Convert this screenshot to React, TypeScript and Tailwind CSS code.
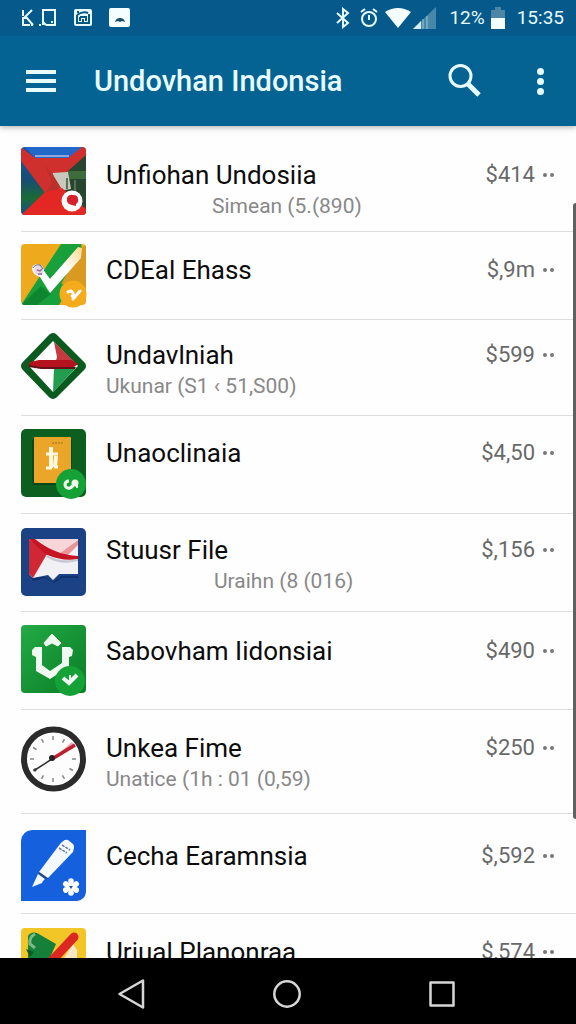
import type { ReactNode } from 'react'

type Item = {
  title: string
  sub?: string
  subClass?: string
  price: string
  rowClass: string
  textClass: string
  icon: ReactNode
}

const SunIcon = () => (
  <svg width="66" height="72" viewBox="0 0 66 72" aria-hidden="true">
    <defs>
      <clipPath id="sun-clip"><rect width="65" height="68" rx="4" /></clipPath>
      <linearGradient id="sun-left" x1="0" y1="0" x2="0" y2="1">
        <stop offset="0" stopColor="#1855a8" />
        <stop offset="0.5" stopColor="#164f70" />
        <stop offset="0.75" stopColor="#1c6a37" />
        <stop offset="1" stopColor="#17508a" />
      </linearGradient>
    </defs>
    <g clipPath="url(#sun-clip)">
      <rect width="65" height="68" fill="url(#sun-left)" />
      <path d="M4 0H62L50 11H14Z" fill="#2268c8" />
      <path d="M14 9H48" stroke="#8fa6dc" strokeWidth="2" />
      <path d="M28 20L65 8V68H38Z" fill="#27452f" />
      <path d="M46 24H65V32H46Z" fill="#3d6b3c" />
      <path d="M31 25H47L50 42L38 44Z" fill="#c9c8bd" />
      <path d="M46 31v11M54 33v12" stroke="#5c6d58" strokeWidth="2" />
      <path d="M0 0L14 11H47L61 0H65V8L46 25L31 26L40 41L24 46L0 14Z" fill="#cf2f2d" />
      <path d="M24 18L40 41L24 46L31 36Z" fill="#b9312c" />
      <path d="M0 68L24 45L41 41L65 62V68Z" fill="#e22724" />
    </g>
    <circle cx="51" cy="54" r="10.5" fill="#fff" />
    <path d="M46 51q2-4 6-3q5 0 5 4q1 3-2 5l0 2-4-1q-6-1-5-7Z" fill="#d6202c" />
  </svg>
)

const CheckIcon = () => (
  <svg width="66" height="72" viewBox="0 0 66 72" aria-hidden="true">
    <defs>
      <clipPath id="check-clip"><rect width="65" height="61" rx="4" /></clipPath>
      <linearGradient id="check-white" x1="0" y1="1" x2="1" y2="0">
        <stop offset="0.6" stopColor="#fff" />
        <stop offset="1" stopColor="#fbd98a" />
      </linearGradient>
    </defs>
    <g clipPath="url(#check-clip)">
      <rect width="65" height="61" fill="#efa91d" />
      <path d="M0 61L40 0H60L63 18L38 61Z" fill="#17a03b" />
      <path d="M0 61L20 42L30 50L16 61Z" fill="#0e8630" />
      <path d="M60 6L65 0V44L40 40Z" fill="#d99a22" />
      <path d="M11 25Q11 20 18 20L29 35L57 3L61 4L60 14L29 49L19 33Q12 31 11 25Z" fill="url(#check-white)" />
    </g>
    <circle cx="18" cy="26" r="5" fill="#e4d9ea" />
    <path d="M12 24q2-4 7-3l3 4" stroke="#56647e" strokeWidth="1" fill="none" />
    <path d="M16 26l3 1 2-2M17 30h4" stroke="#a0668f" strokeWidth="1.5" fill="none" />
    <circle cx="52" cy="50" r="13.5" fill="#f4ab1c" />
    <path d="M52 55l7-8M47 48l3-1 2 2M51 52l2-1" stroke="#fff" strokeWidth="3" fill="none" strokeLinecap="round" />
  </svg>
)

const DiamondIcon = () => (
  <svg width="66" height="72" viewBox="0 0 66 72" aria-hidden="true">
    <path d="M32 5L60 33L32 61L5 33Z" fill="#0b5a20" stroke="#0b5a20" strokeWidth="10" strokeLinejoin="round" />
    <path d="M32 8L57 33L32 59L8 33Z" fill="#fff" />
    <path d="M33 9L56 31H34L36 24Z" fill="#c43a40" />
    <path d="M33 34H56L32 59Z" fill="#249c50" />
    <path d="M9 29L18 27H50L57 31L53 34H18L8 33Z" fill="#b5121e" />
    <path d="M8 33L20 35H54" stroke="#611117" strokeWidth="2" fill="none" />
  </svg>
)

const BookIcon = () => (
  <svg width="66" height="72" viewBox="0 0 66 72" aria-hidden="true">
    <rect width="65" height="68" rx="5" fill="#0d5f20" />
    <rect x="11" y="10" width="40" height="46" rx="2" fill="#084716" />
    <rect x="13" y="8" width="37" height="46" rx="1" fill="#eba528" />
    <path d="M31 14h11" stroke="#9b731f" strokeDasharray="2 1" />
    <path d="M30 18V39M35 27L34 38" stroke="#fff7de" strokeWidth="4" fill="none" />
    <path d="M25 25H37M25 39H31M33 38H37" stroke="#fff7de" strokeWidth="3" fill="none" />
    <circle cx="50" cy="55" r="15" fill="#14a237" />
    <path d="M48 52q-4 0-4 4q1 4 5 3q3-1 4-5" stroke="#eefbea" strokeWidth="3" fill="none" />
    <circle cx="54" cy="54" r="3.5" fill="#eefbea" />
    <path d="M56 54v5" stroke="#eefbea" strokeWidth="2" />
  </svg>
)

const MailIcon = () => (
  <svg width="66" height="72" viewBox="0 0 66 72" aria-hidden="true">
    <rect width="65" height="68" rx="5" fill="#1c4286" />
    <path d="M10 49H24L32 54L40 48H57V50L41 50L33 55L24 50L12 53Z" fill="#12306a" />
    <path d="M8 11H57V46H38L32 52L27 47L12 50L8 46Z" fill="#f1f1f5" />
    <path d="M14 11H57L39 26Z" fill="#f7d5d8" />
    <path d="M38 26L57 12V17L46 28Z" fill="#e9949a" />
    <path d="M8 11L26 26L12 50L8 46Z" fill="#cf2834" />
    <path d="M8 11H14Q34 27 57 28V31Q42 34 24 26Z" fill="#c51525" />
    <path d="M26 27Q40 35 57 31V33Q40 38 25 29Z" fill="#c8c9d2" />
  </svg>
)

const ShieldIcon = () => (
  <svg width="66" height="72" viewBox="0 0 66 72" aria-hidden="true">
    <defs>
      <linearGradient id="shield-bg" x1="0" y1="0" x2="1" y2="1">
        <stop offset="0" stopColor="#23aa46" />
        <stop offset="1" stopColor="#0a7d25" />
      </linearGradient>
    </defs>
    <rect width="65" height="68" rx="4" fill="url(#shield-bg)" />
    <path d="M31 9L40 18L37 21L31 18L25 21L23 18Z" fill="#effaf0" stroke="#effaf0" strokeWidth="1" strokeLinejoin="round" />
    <path d="M11 25L14 22H21V40L29 46L41 38V22H49L52 25L51 31L48 32V42L29 54L15 46V32L11 30Z" fill="#effaf0" />
    <circle cx="49" cy="56" r="15" fill="#14a237" />
    <path d="M42 53l6 5 8-8" stroke="#effaf0" strokeWidth="4" fill="none" />
    <path d="M49 50v6" stroke="#effaf0" strokeWidth="2" />
  </svg>
)

const ticks = [0, 30, 60, 90, 120, 150, 180, 210, 240, 270, 300, 330]

const ClockIcon = () => (
  <svg width="66" height="72" viewBox="0 0 66 72" aria-hidden="true">
    <circle cx="32.5" cy="33" r="29.5" fill="#fdfdfd" stroke="#2b2b2b" strokeWidth="6" />
    {ticks.map((deg) => (
      <path key={deg} d="M32 10v4" stroke="#888" strokeWidth="1.5" transform={`rotate(${deg} 32 33)`} />
    ))}
    <path d="M31 33L51 16L54 20Z" fill="#e9a9ae" />
    <path d="M31 33L54 19" stroke="#c01d31" strokeWidth="3.5" />
    <path d="M31 33L14 44" stroke="#333" strokeWidth="1.5" />
    <circle cx="31" cy="32" r="3" fill="#222" />
    <circle cx="14" cy="44" r="1.5" fill="#333" />
  </svg>
)

const PenIcon = () => (
  <svg width="66" height="72" viewBox="0 0 66 72" aria-hidden="true">
    <path d="M11 0H65V62Q64 70 56 71H0V11Q1 1 11 0Z" fill="#1560dd" />
    <path d="M41 12Q44 9 47 10L52 14Q54 16 52 22L27 48L18 42L39 14Z" fill="#f4f8ff" />
    <path d="M17 44L24 49L22 51L21 53L11 57Z" fill="#f4f8ff" />
    <path d="M41 15L49 20M38 18L46 23" stroke="#6b7b96" strokeWidth="1.5" strokeDasharray="3 1" />
    <path d="M18 43L26 49" stroke="#2d4775" strokeWidth="2" />
    {[0, 60, 120, 180, 240, 300].map((deg) => (
      <circle key={deg} cx="50" cy="51" r="2.8" fill="#fff" transform={`rotate(${deg} 50 57)`} />
    ))}
    <circle cx="50" cy="57" r="5" fill="#fff" />
    <path d="M48 56h4l-2 3Z" fill="#2459a8" />
  </svg>
)

const PlanIcon = () => (
  <svg width="66" height="72" viewBox="0 0 66 72" aria-hidden="true">
    <rect width="65" height="68" rx="4" fill="#f2c626" />
    <path d="M52 16L56 22V60H24Z" fill="#f3e7c8" />
    <path d="M7 8Q10 3 16 5L35 16L22 46L7 32Z" fill="#15803a" />
    <path d="M14 6Q8 9 9 16L14 20" stroke="#7db98a" strokeWidth="3" fill="none" />
    <path d="M5 21l8 3-4 5" fill="#0c5a27" />
    <path d="M26 38L53 9" stroke="#dc2723" strokeWidth="9" strokeLinecap="round" />
  </svg>
)

const ITEMS: Item[] = [
  { title: 'Unfiohan Undosiia', sub: 'Simean (5.(890)', subClass: 'pl-[106px]', price: '$414', rowClass: 'h-[98px] pt-[13px]', textClass: 'pt-3', icon: <SunIcon /> },
  { title: 'CDEal Ehass', price: '$,9m', rowClass: 'h-[88px] pt-3', textClass: 'pt-[10px]', icon: <CheckIcon /> },
  { title: 'Undavlniah', sub: 'Ukunar (S1 ‹ 51,S00)', price: '$599', rowClass: 'h-24 pt-[13px]', textClass: 'pt-[6px]', icon: <DiamondIcon /> },
  { title: 'Unaoclinaia', price: '$4,50', rowClass: 'h-[98px] pt-[13px]', textClass: 'pt-[8px]', icon: <BookIcon /> },
  { title: 'Stuusr File', sub: 'Uraihn (8 (016)', subClass: 'pl-[108px]', price: '$,156', rowClass: 'h-[98px] pt-[14px]', textClass: 'pt-[6px]', icon: <MailIcon /> },
  { title: 'Sabovham Iidonsiai', price: '$490', rowClass: 'h-[98px] pt-[13px]', textClass: 'pt-[10px]', icon: <ShieldIcon /> },
  { title: 'Unkea Fime', sub: 'Unatice (1h : 01 (0,59)', price: '$250', rowClass: 'h-[104px] pt-4', textClass: 'pt-[6px]', icon: <ClockIcon /> },
  { title: 'Cecha Earamnsia', price: '$,592', rowClass: 'h-[100px] pt-4', textClass: 'pt-[10px]', icon: <PenIcon /> },
  { title: 'Uriual Planonraa', price: '$,574', rowClass: 'h-[98px] pt-[14px]', textClass: 'pt-[8px]', icon: <PlanIcon /> },
]

function StatusBar () {
  return (
    <div className="flex h-9 items-center justify-between bg-[#055a8b] pr-3 pl-5 text-[#e8fbff]">
      <div className="flex items-center gap-4">
        <svg width="37" height="20" viewBox="0 0 37 20" fill="none" stroke="currentColor" strokeWidth="2" aria-hidden="true">
          <path d="M3 2v6M12 2L4 10M6 10H3v7h7M6 9l7 8M12 15v3M20 16v2M23 17V2h12v15H26M26 17l-3-3M32 13v2" />
        </svg>
        <svg width="20" height="20" viewBox="0 0 20 20" fill="none" aria-hidden="true">
          <rect x="1" y="1" width="18" height="17" rx="2" fill="#e8fbff" />
          <path d="M4 4h2M4 7q6-4 11-2M4 7v8h12V6M7 9h6v4M7 13V9M10 11v4" stroke="#075883" strokeWidth="2" />
        </svg>
        <svg width="21" height="20" viewBox="0 0 21 20" aria-hidden="true">
          <rect width="21" height="19" rx="2" fill="#f4feff" />
          <path d="M6 14q1-4 5-4t5 4l-3-1-2 1-2-1Z" fill="#174c68" />
        </svg>
      </div>
      <div className="flex items-center text-[19px] leading-6">
        <svg width="16" height="22" viewBox="0 0 16 22" fill="none" stroke="currentColor" strokeWidth="2" aria-hidden="true">
          <path d="M2 6l11 10-5 4V2l5 4L2 16" />
        </svg>
        <svg className="ml-2" width="20" height="22" viewBox="0 0 20 22" fill="none" stroke="currentColor" strokeWidth="2" aria-hidden="true">
          <circle cx="10" cy="12" r="7" />
          <path d="M10 8v5M2 5l4-3M18 5l-4-3" />
        </svg>
        <svg className="ml-1.5" width="26" height="22" viewBox="0 0 26 22" aria-hidden="true">
          <path d="M0 5Q13-3 26 5L13 21Z" fill="#f4feff" />
        </svg>
        <svg className="ml-0.5" width="24" height="23" viewBox="0 0 24 23" aria-hidden="true">
          <path d="M0 22L23 0V22Z" fill="#4688aa" />
          <path d="M0 22L8 14V22Z" fill="#d4edf4" />
          <path d="M10 12v10M14 9v13" stroke="#9cc6d8" />
        </svg>
        <span className="ml-3">12%</span>
        <svg className="ml-1.5" width="14" height="22" viewBox="0 0 14 22" aria-hidden="true">
          <path d="M0 3H4V0H10V3H14V12H0Z" fill="#4d86a5" />
          <path d="M0 11H14V22H0Z" fill="#f4feff" />
        </svg>
        <span className="ml-3">15:35</span>
      </div>
    </div>
  )
}

export default function App () {
  return (
    <div className="flex h-screen flex-col overflow-hidden bg-[#fefefe] font-[Roboto,'Liberation_Sans',sans-serif]">
      <header className="relative z-10 bg-[#056394] shadow-[0_1px_6px_rgba(0,0,0,0.35)]">
        <StatusBar />
        <div className="flex h-[90px] items-center pr-[26px] pl-[26px] text-[#e8fbff]">
          <button aria-label="Menu" className="flex w-[30px] flex-col gap-[5px]">
            <span className="h-1 w-full bg-current" />
            <span className="h-1 w-full bg-current" />
            <span className="h-1 w-full bg-current" />
          </button>
          <h1 className="flex-1 pl-[38px] text-[29px] leading-9 font-medium">Undovhan Indonsia</h1>
          <button aria-label="Search">
            <svg width="34" height="34" viewBox="0 0 34 34" fill="none" stroke="currentColor" aria-hidden="true">
              <circle cx="12.5" cy="12" r="10.5" strokeWidth="3" />
              <path d="M20 20L31 31" strokeWidth="5" />
            </svg>
          </button>
          <button aria-label="More options" className="ml-12 flex w-5 flex-col items-center gap-[3px]">
            <span className="size-[7px] rounded-full bg-current" />
            <span className="size-[7px] rounded-full bg-current" />
            <span className="size-[7px] rounded-full bg-current" />
          </button>
        </div>
      </header>

      <main className="relative min-h-0 flex-1 overflow-hidden pt-2">
        <ul className="pl-[21px]">
          {ITEMS.map((item) => (
            <li key={item.title} className={`flex items-start border-b border-[#dedede] ${item.rowClass}`}>
              <div className="shrink-0">{item.icon}</div>
              <div className={`flex-1 pl-[19px] ${item.textClass}`}>
                <h2 className="text-[26px] leading-8 text-[#0c0c0c]">{item.title}</h2>
                {item.sub && (
                  <p className={`text-[21px] leading-[30px] text-[#888] ${item.subClass ?? ''}`}>{item.sub}</p>
                )}
              </div>
              <div className={`flex items-center pr-[22px] ${item.textClass}`}>
                <span className="text-[22px] leading-8 text-[#686868]">{item.price}</span>
                <button aria-label={`Options for ${item.title}`} className="ml-2 flex gap-[3px]">
                  <span className="size-1 rounded-full bg-[#777]" />
                  <span className="size-1 rounded-full bg-[#777]" />
                </button>
              </div>
            </li>
          ))}
        </ul>
        <div className="absolute top-[77px] right-0 h-[74%] w-[3px] rounded-l-sm bg-[#606060]" />
      </main>

      <nav className="z-10 flex h-[66px] shrink-0 items-center justify-center gap-[127px] bg-black pt-[6px] pr-[2px] text-[#d6d6d6]">
        <button aria-label="Back">
          <svg width="28" height="30" viewBox="0 0 28 30" fill="none" stroke="currentColor" strokeWidth="2.5" strokeLinejoin="round" aria-hidden="true">
            <path d="M1.5 15L25 1.5V28.5Z" />
          </svg>
        </button>
        <button aria-label="Home">
          <svg width="28" height="30" viewBox="0 0 28 30" fill="none" stroke="currentColor" strokeWidth="2.5" aria-hidden="true">
            <circle cx="14" cy="15" r="12.7" />
          </svg>
        </button>
        <button aria-label="Recent apps">
          <svg width="28" height="30" viewBox="0 0 28 30" fill="none" stroke="currentColor" strokeWidth="2.5" strokeLinejoin="round" aria-hidden="true">
            <rect x="2.5" y="3.5" width="23" height="23" />
          </svg>
        </button>
      </nav>
    </div>
  )
}
